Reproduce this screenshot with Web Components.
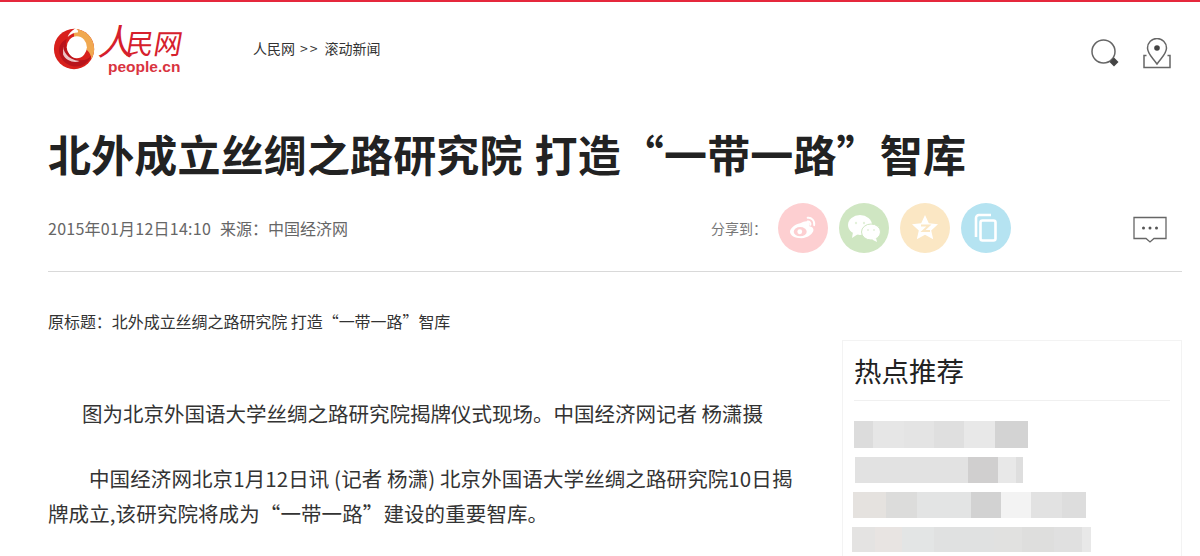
<!DOCTYPE html>
<html lang="zh">
<head>
<meta charset="utf-8">
<title>北外成立丝绸之路研究院</title>
<style>
  html, body { margin: 0; padding: 0; background: #fff; height: 556px; overflow: hidden; }
  body { font-family: "Noto Sans CJK SC", "Liberation Sans", sans-serif; color: #333; }
</style>
</head>
<body>
<site-header></site-header>
<article-head title-text="北外成立丝绸之路研究院 打造“一带一路”智库">
  <span slot="date">2015年01月12日14:10</span>
  <span slot="source">来源：中国经济网</span>
</article-head>
<page-body>
  <article-text></article-text>
  <hot-list slot="side"></hot-list>
</page-body>

<script>
class SiteHeader extends HTMLElement {
  constructor() {
    super();
    this.attachShadow({ mode: 'open' });
    this.shadowRoot.innerHTML = `
      <style>
        :host { display: flex; align-items: center; height: 100px; border-top: 2px solid #e5283c; box-sizing: border-box; padding: 0 29px 0 53px; }
        .logo { display: flex; align-items: center; width: 200px; height: 60px; margin-top: -4px; }
        .words { display: flex; flex-direction: column; margin-left: 4px; color: #d6202c; }
        .cn { display: flex; align-items: flex-end; height: 36px; line-height: 30px; font-weight: 400; transform: skewX(-10deg); margin-top: -3px; }
        .cn b { font-size: 36px; line-height: 36px; font-weight: 400; margin-right: -9px; }
        .cn span { font-size: 28px; line-height: 30px; margin-right: 0; }
        .en { font: bold 15.500px/16px "Liberation Sans", sans-serif; margin-left: 8px; margin-top: 2px; color: #d9343f; }
        .crumb { display: flex; font-size: 14px; color: #333; margin-top: -6px; white-space: pre; }
        .crumb .sep { margin: 0 5px; letter-spacing: 2px; }
        .tools { margin-left: auto; display: flex; gap: 24px; align-items: center; margin-top: 4px; }
        svg { display: block; }
      </style>
      <div class="logo">
        <svg width="43" height="44" viewBox="0 0 47 46">
          <circle cx="23" cy="23" r="22" fill="#d8201c"/>
          <path d="M23 1a22 22 0 0 1 22 22c0 4-1 8-3 11-1-7-5-14-19-13z" fill="#f0a850"/>
          <ellipse cx="26" cy="21" rx="11" ry="12" fill="#fff"/>
          <path d="M15 12c-3 9 1 20 13 23 6 1 11-1 14-5-2 7-10 13-18 12C13 41 5 31 7 21c1-4 5-8 8-9z" fill="#b8141c"/>
          <path d="M11 17c-1 8 5 18 18 19-5 3-15 0-18-7z" fill="#fff" opacity=".75"/>
          <path d="M24 1C20 3 17 7 16 10c3-3 7-5 11-5 1-1 0-4-3-4z" fill="#fff"/>
        </svg>
        <div class="words">
          <div class="cn"><b>人</b><span>民</span><span>网</span></div>
          <span class="en">people.cn</span>
        </div>
      </div>
      <div class="crumb"><span>人民网</span><span class="sep">&gt;&gt;</span><span>滚动新闻</span></div>
      <div class="tools">
        <svg width="28" height="29" viewBox="0 0 28 29" fill="none">
          <circle cx="12.500" cy="12.500" r="11.500" stroke="#666" stroke-width="1.500"/>
          <path d="M23 18.500l4.500 4.500-4.500 4.500-4.500-4.500z" fill="#444"/>
        </svg>
        <svg width="28" height="31" viewBox="0 0 28 31" fill="none" stroke="#666" stroke-width="1.500">
          <path d="M14 26C10 20 4.500 16 4.500 10a9.500 9.500 0 0 1 19 0c0 6-5.500 10-9.500 16z"/>
          <circle cx="14" cy="10" r="2.800" fill="#444" stroke="none"/>
          <path d="M3.500 17.500H1V29.500h26V17.500h-2.500"/>
        </svg>
      </div>`;
  }
}

class ShareButton extends HTMLElement {
  constructor() {
    super();
    this.attachShadow({ mode: 'open' });
    this.shadowRoot.innerHTML = `
      <style>
        :host { display: flex; width: 50px; height: 50px; border-radius: 50%; align-items: center; justify-content: center; background: var(--c); }
      </style>
      <slot></slot>`;
  }
}

class ArticleHead extends HTMLElement {
  constructor() {
    super();
    this.attachShadow({ mode: 'open' });
    this.shadowRoot.innerHTML = `
      <style>
        :host { display: block; padding: 0 18px 0 48px; }
        h1 { margin: 22px 0 0; font-size: 43px; line-height: 62px; font-weight: 700; color: #222; white-space: nowrap; letter-spacing: .15px; word-spacing: 2px; }
        .meta { display: flex; align-items: center; height: 86px; margin-top: 2px; border-bottom: 1px solid #d9d9d9; padding-bottom: 2px; box-sizing: border-box; font-size: 16px; color: #666; }
        .date { margin-right: 9px; letter-spacing: .25px; }
        .share { display: flex; align-items: center; gap: 11px; margin-left: auto; margin-right: 122px; }
        .share .lbl { font-size: 14px; color: #777; margin-right: 0; }
        .cmt { margin: 4px 15px 0 0; display: block; }
        svg { display: block; }
      </style>
      <h1 id="t"></h1>
      <div class="meta">
        <span class="date"><slot name="date"></slot></span>
        <span><slot name="source"></slot></span>
        <div class="share">
          <span class="lbl">分享到：</span>
          <share-button style="--c:#fdcfd1">
            <svg width="30" height="26" viewBox="0 0 32 28">
              <path d="M13 9c5-3 9-3 10 0 .4 1 .2 2-.2 3 3 .6 4.500 2 4.500 4 0 4-6 9-13 9S2 22 2 18c0-3 5-8 11-9z" fill="#fff"/>
              <ellipse cx="13" cy="18" rx="7" ry="5" fill="#fdcfd1"/>
              <circle cx="12.500" cy="18" r="2.600" fill="#fff"/>
              <path d="M21 3c4-.6 8 3 7 8M21 7c2-.3 3.500 1.500 3 3.500" fill="none" stroke="#fff" stroke-width="2" stroke-linecap="round"/>
            </svg>
          </share-button>
          <share-button style="--c:#cfe6c2">
            <svg width="34" height="28" viewBox="0 0 34 28">
              <ellipse cx="13" cy="11" rx="12" ry="10" fill="#fff"/>
              <path d="M6 18l-1 6 6-4z" fill="#fff"/>
              <circle cx="9" cy="9" r="1.200" fill="#e4f1dc"/><circle cx="17" cy="9" r="1.200" fill="#e4f1dc"/>
              <ellipse cx="24" cy="18" rx="9.500" ry="8" fill="#fff" stroke="#cfe6c2"/>
              <path d="M29 24l1 4-5-2.500z" fill="#fff"/>
              <circle cx="21" cy="16" r="1" fill="#e4f1dc"/><circle cx="27" cy="16" r="1" fill="#e4f1dc"/>
            </svg>
          </share-button>
          <share-button style="--c:#fbe7c4">
            <svg width="28" height="27" viewBox="0 0 28 27">
              <path d="M14 1l3.800 8.300 9.200 1-6.800 6.100 2 8.900L14 20.700 5.800 25.300l2-8.900L1 10.300l9.200-1z" fill="#fff"/>
              <path d="M10 11.500h8l-6 5.500h7" fill="none" stroke="#fbe7c4" stroke-width="2"/>
            </svg>
          </share-button>
          <share-button style="--c:#b5e3f1">
            <svg width="24" height="30" viewBox="0 0 24 30" fill="none" stroke="#fff" stroke-width="2.600">
              <rect x="6.500" y="7.500" width="15" height="20" rx="2"/>
              <path d="M2 24V5a3 3 0 0 1 3-3h12"/>
            </svg>
          </share-button>
        </div>
        <svg class="cmt" width="34" height="28" viewBox="0 0 34 28" fill="none">
          <path d="M1 1.500h32v21H21l-4 3.500-4-3.500H1z" stroke="#666" stroke-width="1.300"/>
          <circle cx="10.500" cy="12" r="1.500" fill="#555"/><circle cx="17" cy="12" r="1.500" fill="#555"/><circle cx="23.500" cy="12" r="1.500" fill="#555"/>
        </svg>
      </div>`;
  }
  connectedCallback() {
    this.shadowRoot.getElementById('t').textContent = this.getAttribute('title-text');
  }
}

class PageBody extends HTMLElement {
  constructor() {
    super();
    this.attachShadow({ mode: 'open' });
    this.shadowRoot.innerHTML = `
      <style>
        :host { display: flex; padding: 0 18px 0 48px; justify-content: space-between; }
        .main { width: 750px; }
        .side { width: 340px; margin-top: 68px; }
      </style>
      <div class="main"><slot></slot></div>
      <div class="side"><slot name="side"></slot></div>`;
  }
}

class ArticleText extends HTMLElement {
  constructor() {
    super();
    this.attachShadow({ mode: 'open' });
    this.shadowRoot.innerHTML = `
      <style>
        :host { display: block; color: #333; }
        .orig { font-size: 16px; line-height: 24px; margin: 37px 0 0; color: #333; letter-spacing: -.05px; }
        p { font-size: 20.500px; line-height: 35px; margin: 0; }
        .cap { margin-top: 63px; text-indent: 34px; }
        .lead { margin-top: 30px; text-indent: 41px; letter-spacing: .1px; }
      </style>
      <div class="orig">原标题：北外成立丝绸之路研究院 打造“一带一路”智库</div>
      <p class="cap">图为北京外国语大学丝绸之路研究院揭牌仪式现场。中国经济网记者 杨潇摄</p>
      <p class="lead">中国经济网北京1月12日讯 (记者 杨潇) 北京外国语大学丝绸之路研究院10日揭牌成立,该研究院将成为“一带一路”建设的重要智库。</p>`;
  }
}

class HotList extends HTMLElement {
  constructor() {
    super();
    this.attachShadow({ mode: 'open' });
    const rows = [
      { x: 0, h: 27, gap: 9, segs: [[19,'#dcdcdc'],[31,'#e6e6e6'],[30,'#e4e4e4'],[30,'#dfdfdf'],[31,'#e8e8e8'],[33,'#d3d3d3']] },
      { x: 1, h: 26, gap: 9, segs: [[113,'#e2e2e2'],[30,'#d0cfcf'],[18,'#e8e8e8'],[7,'#dedede']] },
      { x: -1, h: 26, gap: 9, segs: [[33,'#e5e2df'],[31,'#dcdcdb'],[54,'#e3e4e4'],[30,'#d2d2d2'],[30,'#f3f3f3'],[31,'#e2e2e2'],[24,'#dddddd']] },
      { x: -2, h: 25, gap: 0, segs: [[23,'#e4e3e2'],[27,'#e8e4e2'],[32,'#e3e5e5'],[60,'#e0e1e1'],[28,'#e1e1e0'],[32,'#dededd'],[28,'#e0e0e0'],[9,'#e8e8e8']] }
    ];
    const html = rows.map(r =>
      `<div class="row" style="margin-left:${r.x}px;height:${r.h}px;margin-bottom:${r.gap}px">` +
      r.segs.map(s => `<i style="width:${s[0]}px;background:${s[1]}"></i>`).join('') + `</div>`).join('');
    this.shadowRoot.innerHTML = `
      <style>
        :host { display: block; height: 216px; border: 1px solid #f3f3f3; border-bottom: 0; box-sizing: border-box; padding: 0 11px; }
        h2 { margin: 0; height: 59px; line-height: 58px; font-size: 27.500px; font-weight: 400; color: #222; border-bottom: 1px solid #f0f0f0; }
        .rows { margin-top: 20px; }
        .row { display: flex; }
        i { display: block; height: 100%; }
      </style>
      <h2>热点推荐</h2>
      <div class="rows">${html}</div>`;
  }
}

customElements.define('site-header', SiteHeader);
customElements.define('share-button', ShareButton);
customElements.define('article-head', ArticleHead);
customElements.define('page-body', PageBody);
customElements.define('article-text', ArticleText);
customElements.define('hot-list', HotList);
</script>
</body>
</html>
